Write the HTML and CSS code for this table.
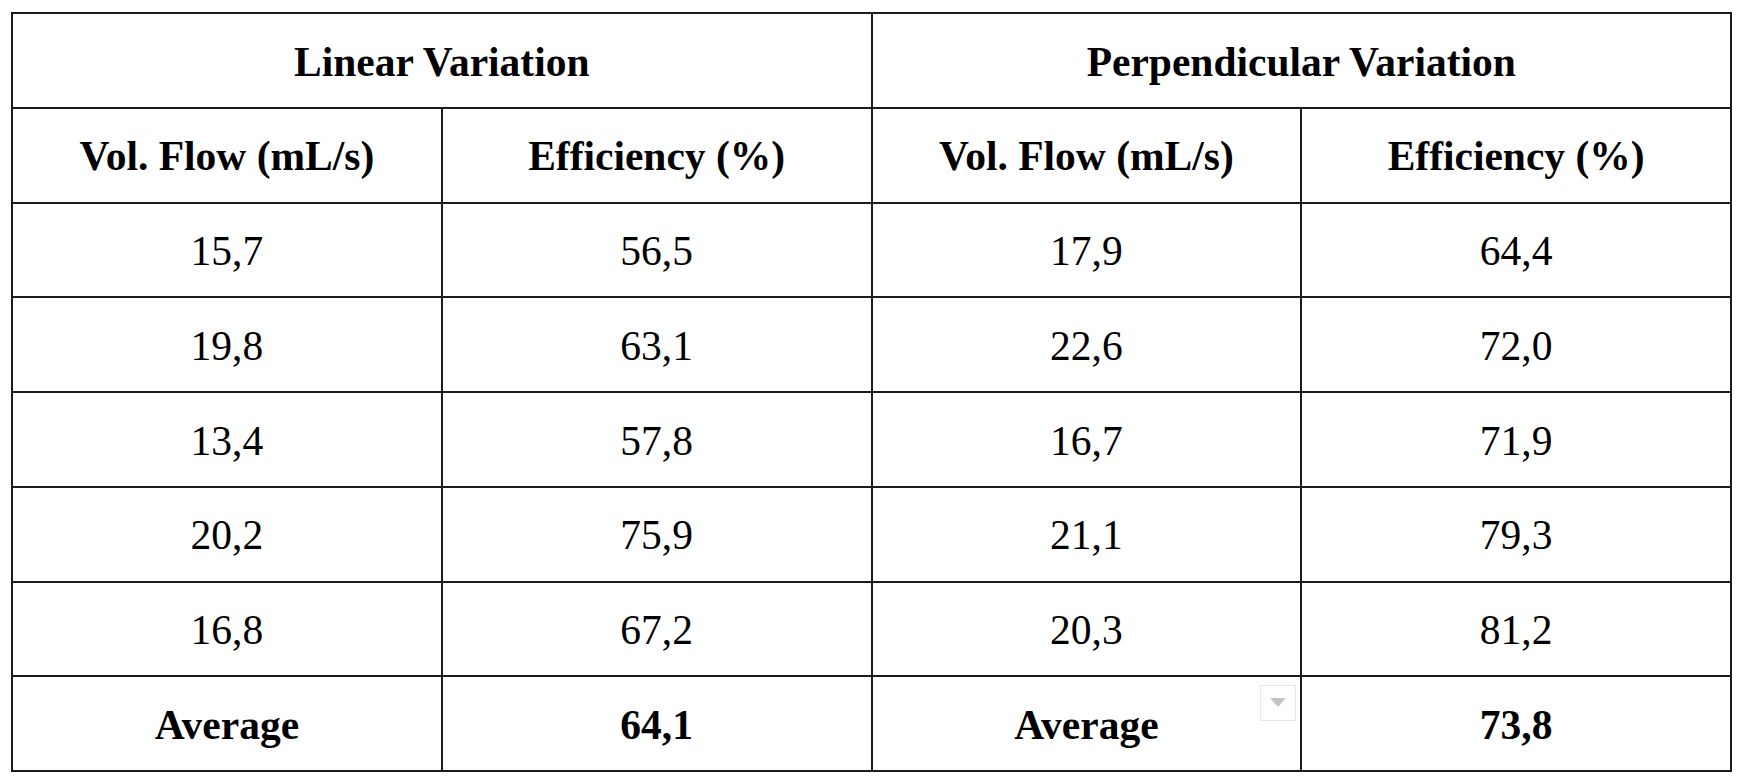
FILE: index.html
```html
<!DOCTYPE html>
<html>
<head>
<meta charset="utf-8">
<link rel="stylesheet" href="styles.css">
</head>
<body>
<table class="data">
  <tr>
    <th colspan="2">Linear Variation</th>
    <th colspan="2">Perpendicular Variation</th>
  </tr>
  <tr>
    <th>Vol. Flow (mL/s)</th>
    <th>Efficiency (%)</th>
    <th>Vol. Flow (mL/s)</th>
    <th>Efficiency (%)</th>
  </tr>
  <tr><td>15,7</td><td>56,5</td><td>17,9</td><td>64,4</td></tr>
  <tr><td>19,8</td><td>63,1</td><td>22,6</td><td>72,0</td></tr>
  <tr><td>13,4</td><td>57,8</td><td>16,7</td><td>71,9</td></tr>
  <tr><td>20,2</td><td>75,9</td><td>21,1</td><td>79,3</td></tr>
  <tr><td>16,8</td><td>67,2</td><td>20,3</td><td>81,2</td></tr>
  <tr class="avg">
    <th>Average</th>
    <th>64,1</th>
    <th class="has-menu">Average<span class="menu-btn"><span class="tri"></span></span></th>
    <th>73,8</th>
  </tr>
</table>
</body>
</html>
```
FILE: styles.css
```css
html, body {
  margin: 0;
  padding: 0;
  background: #ffffff;
}
body {
  padding: 12px 0 0 11px;
}
.data {
  border-collapse: collapse;
  width: 1721px;
  table-layout: fixed;
  font-family: "Liberation Serif", "Times New Roman", serif;
  font-size: 41.5px;
  color: #000;
}
.data tr {
  height: 94.75px;
}
.data th, .data td {
  border: 2px solid #1c1c1c;
  text-align: center;
  vertical-align: middle;
  padding: 4px 0 0 0;
  line-height: 1;
}
.data th {
  font-weight: bold;
}
.data td {
  font-weight: normal;
}
.has-menu {
  position: relative;
}
.menu-btn {
  position: absolute;
  right: 4px;
  top: 8px;
  width: 36px;
  height: 36px;
  border: 1px solid #e6e6e6;
  box-sizing: border-box;
  background: #fff;
}
.tri {
  position: absolute;
  left: 9px;
  top: 12px;
  width: 0;
  height: 0;
  border-left: 8px solid transparent;
  border-right: 8px solid transparent;
  border-top: 9px solid #c4c4c4;
}
```
